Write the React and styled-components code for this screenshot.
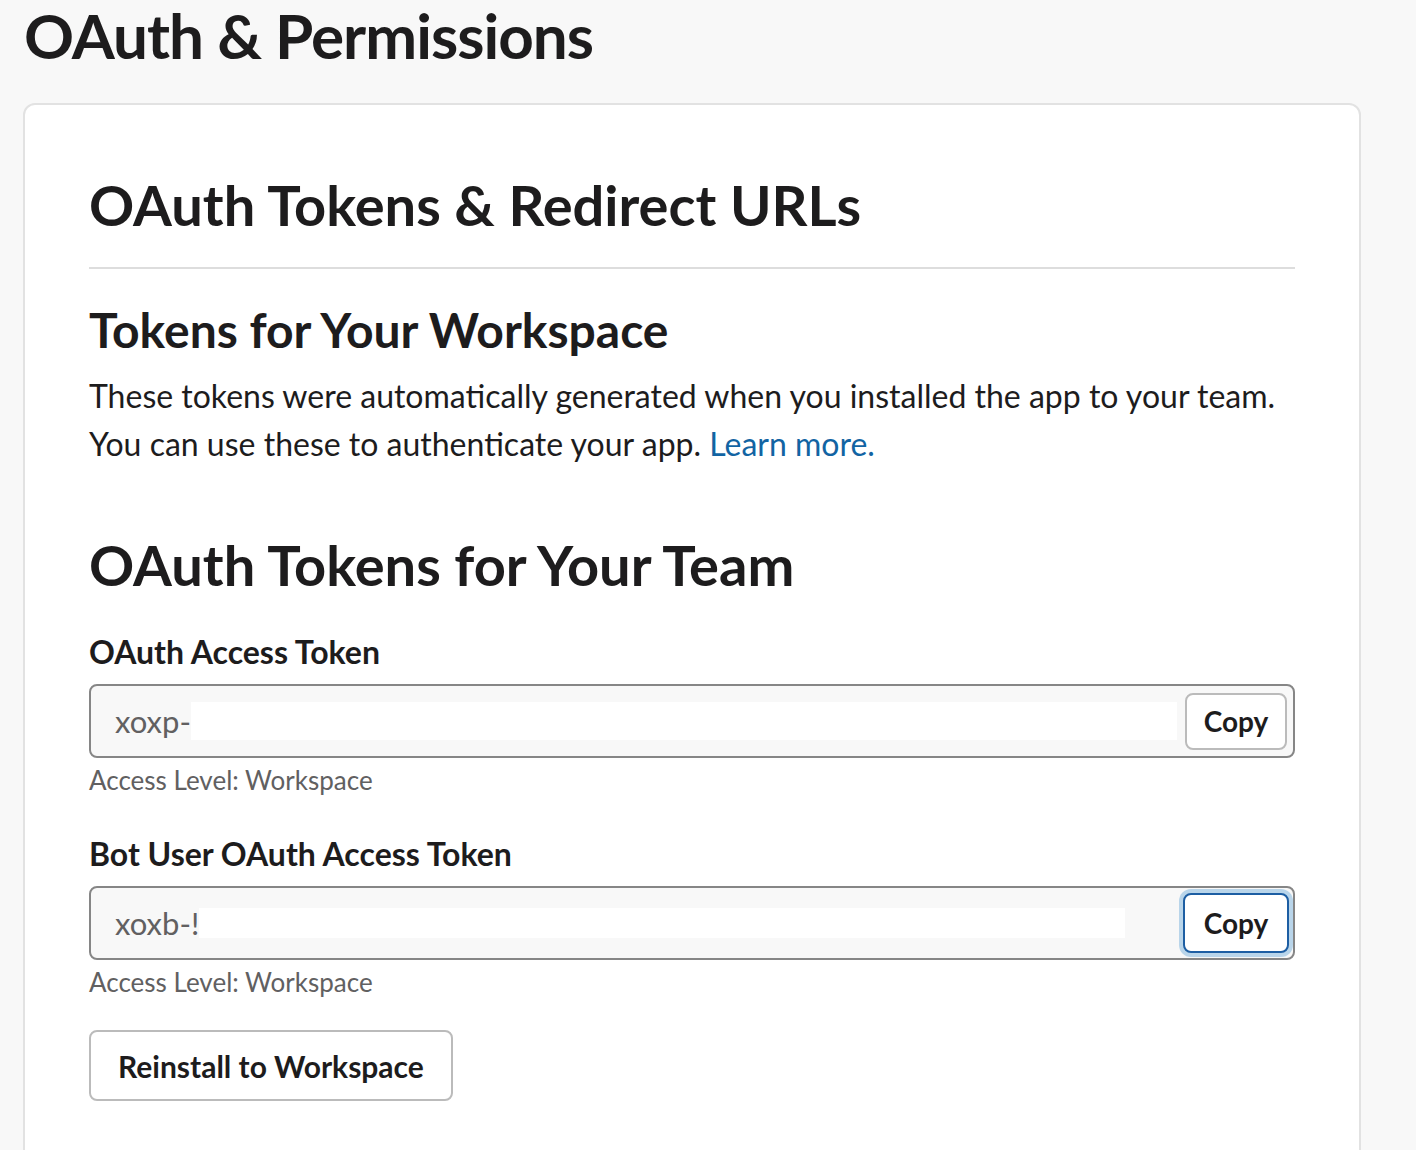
import React from 'react';
import styled, { createGlobalStyle } from 'styled-components';

const GlobalStyle = createGlobalStyle`
  html, body {
    margin: 0;
    padding: 0;
    background: #f8f8f8;
    font-family: Lato, "Noto Sans", sans-serif;
    color: #1d1c1d;
  }
`;

const Page = styled.div`
  padding: 0 55px 0 23px;
  height: 1150px;
  overflow: hidden;
`;

const PageTitle = styled.h1`
  margin: 0;
  padding: 0 0 0 1px;
  font-size: 62px;
  font-weight: 700;
  line-height: 70px;
  letter-spacing: -1px;
  color: #1d1c1d;
`;

const Card = styled.section`
  margin-top: 33px;
  background: #fff;
  border: 2px solid #e2e2e2;
  border-radius: 12px;
  padding: 64px 64px 80px;
`;

const SectionTitle = styled.h2`
  margin: 0;
  font-size: 56px;
  font-weight: 700;
  line-height: 72px;
`;

const Divider = styled.hr`
  border: none;
  border-top: 2px solid #dddddd;
  margin: 26px 0 34px;
`;

const SubTitle = styled.h3`
  margin: 0;
  font-size: 48px;
  font-weight: 700;
  line-height: 54px;
`;

const Paragraph = styled.p`
  margin: 15px 0 0;
  font-size: 32px;
  line-height: 48px;
  color: #1d1c1d;
`;

const Link = styled.a`
  color: #1264a3;
  text-decoration: none;
`;

const TeamTitle = styled(SectionTitle)`
  margin-top: 61px;
`;

const Field = styled.div`
  margin-top: ${(p) => p.$gap}px;
`;

const Label = styled.div`
  font-size: 32px;
  font-weight: 700;
  line-height: 40px;
  margin-bottom: 12px;
`;

const TokenBox = styled.div`
  display: flex;
  align-items: center;
  height: 74px;
  box-sizing: border-box;
  border: 2px solid #868686;
  border-radius: 8px;
  background: #f8f8f8;
  padding: 0 6px 0 24px;
`;

const TokenText = styled.span`
  font-size: 31px;
  color: #616061;
  flex: none;
`;

const Redacted = styled.span`
  display: block;
  height: ${(p) => p.$h}px;
  width: ${(p) => p.$w}px;
  background: #ffffff;
  flex: none;
`;

const Spacer = styled.div`
  flex: 1;
`;

const CopyButton = styled.button`
  flex: none;
  height: ${(p) => (p.$focused ? 60 : 57)}px;
  width: ${(p) => (p.$focused ? 106 : 102)}px;
  box-sizing: border-box;
  background: #fff;
  border: 2px solid ${(p) => (p.$focused ? '#1d5ea3' : '#bbbbbb')};
  border-radius: 8px;
  box-shadow: ${(p) => (p.$focused ? '0 0 0 4px #b9d5ea' : 'none')};
  margin-right: ${(p) => (p.$focused ? -2 : 0)}px;
  font-family: Lato, "Noto Sans", sans-serif;
  font-size: 28px;
  font-weight: 700;
  color: #1d1c1d;
  padding: 0;
  cursor: pointer;
`;

const Hint = styled.div`
  margin-top: 5px;
  font-size: 26px;
  line-height: 34px;
  color: #616061;
`;

const SecondaryButton = styled.button`
  margin-top: 31px;
  height: 71px;
  padding: 0 27px;
  box-sizing: border-box;
  background: #fff;
  border: 2px solid #bbbbbb;
  border-radius: 8px;
  font-family: Lato, "Noto Sans", sans-serif;
  font-size: 30px;
  font-weight: 700;
  color: #1d1c1d;
  cursor: pointer;
`;

const tokens = [
  { label: 'OAuth Access Token', prefix: 'xoxp-', hide: { w: 986, h: 38 }, focused: false, gap: 31 },
  { label: 'Bot User OAuth Access Token', prefix: 'xoxb-!', hide: { w: 926, h: 30 }, focused: true, gap: 37 },
];

const App = () => (
  <Page>
    <GlobalStyle />
    <PageTitle>OAuth &amp; Permissions</PageTitle>
    <Card>
      <SectionTitle>OAuth Tokens &amp; Redirect URLs</SectionTitle>
      <Divider />
      <SubTitle>Tokens for Your Workspace</SubTitle>
      <Paragraph>
        These tokens were automatically generated when you installed the app to your team.
        <br />
        You can use these to authenticate your app. <Link href="#">Learn more.</Link>
      </Paragraph>
      <TeamTitle>OAuth Tokens for Your Team</TeamTitle>
      {tokens.map((t) => (
        <Field key={t.label} $gap={t.gap}>
          <Label>{t.label}</Label>
          <TokenBox>
            <TokenText>{t.prefix}</TokenText>
            <Redacted $w={t.hide.w} $h={t.hide.h} />
            <Spacer />
            <CopyButton $focused={t.focused}>Copy</CopyButton>
          </TokenBox>
          <Hint>Access Level: Workspace</Hint>
        </Field>
      ))}
      <SecondaryButton>Reinstall to Workspace</SecondaryButton>
    </Card>
  </Page>
);

export default App;
